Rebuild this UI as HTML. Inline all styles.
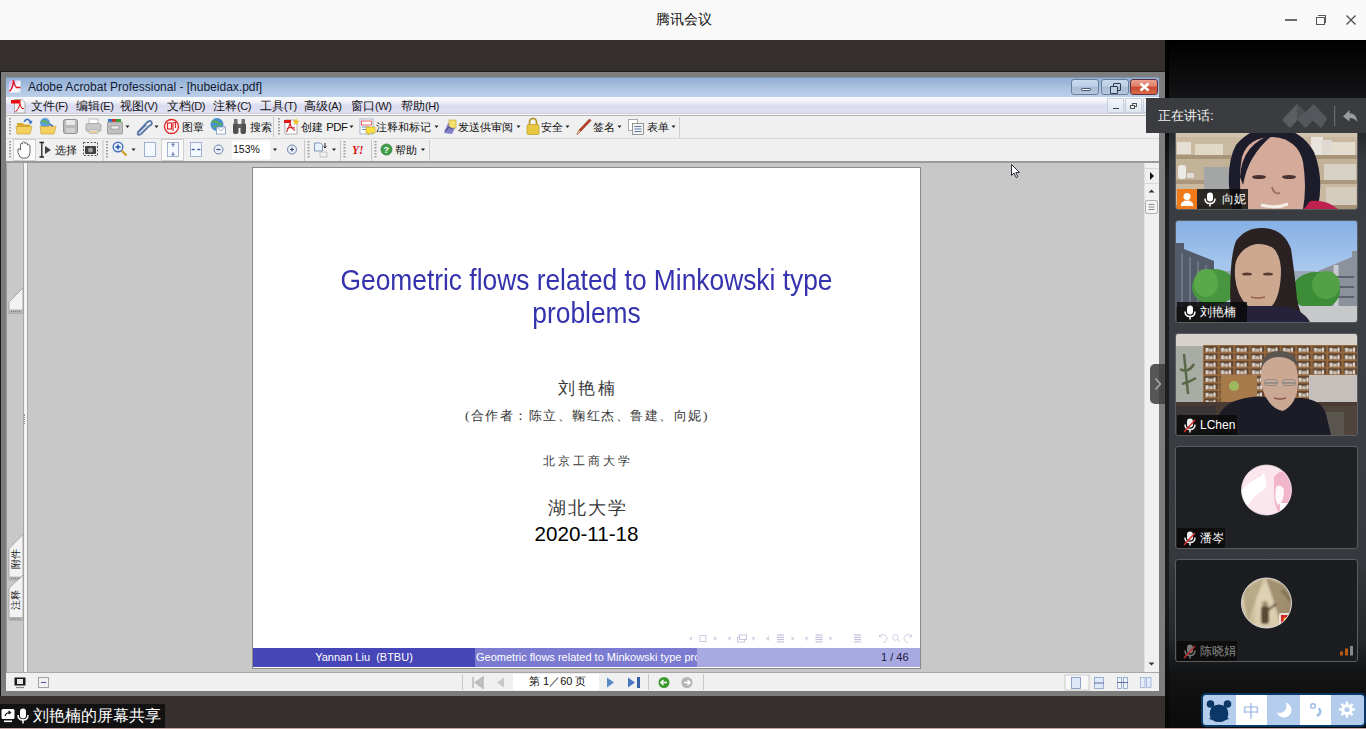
<!DOCTYPE html>
<html><head><meta charset="utf-8">
<style>
*{box-sizing:border-box;margin:0;padding:0}
html,body{width:1366px;height:729px;overflow:hidden;background:#35302d;font-family:"Liberation Sans",sans-serif;position:relative}
.a{position:absolute}
#tt{left:0;top:0;width:1366px;height:40px;background:#f9f9f9}
#tt .t{left:0;width:1366px;top:12px;text-align:center;font-size:13.6px;line-height:15px;color:#111;padding-left:1px}
#rp{left:1165px;top:40px;width:201px;height:689px;background:linear-gradient(#000 0px,#131416 58px,#36393d 120px,#3b3e42 200px,#393c40 400px,#35383c 520px,#25272a 600px,#131415 630px,#0a0a0b 689px)}
#win{left:1px;top:71px;width:1164px;height:625px;background:#7d7d7d}
#ttl{left:6px;top:77px;width:1153px;height:20px;background:linear-gradient(#6a7a90 0,#94b0d4 1px,#98b4d8 20%,#aec4e2 60%,#bccfea 100%)}
#menu{left:6px;top:97px;width:1153px;height:17px;background:linear-gradient(#fbfcfe 0,#f2f3fa 25%,#dcdcf0 50%,#e0e0f4 90%,#cacad4 100%)}
#tb{left:6px;top:114px;width:1153px;height:49px;background:#f0f0f0;border-top:1px solid #fafafa}
#doc{left:6px;top:163px;width:1153px;height:510px;background:#c8c8c8}
#stat{left:6px;top:672px;width:1153px;height:19px;background:#f0f0f0;border-top:1px solid #a8a8a8}
#page{left:252px;top:167px;width:669px;height:502px;background:#fff;border:1px solid #8a8a8a}

.wb{border:1px solid #6a7c98;border-radius:3px;background:linear-gradient(#c9d9ec 0,#bcd0e8 45%,#a8bcd4 50%,#b4c8e0 100%)}
.mn{font-size:11.5px;color:#151515;white-space:nowrap;line-height:14px;top:99px!important}
.mb{width:17px;height:15px;border:1px solid #c8d0dc;background:linear-gradient(#f4f7fb,#dde5f0)}
.tl{font-size:11.3px;color:#111;white-space:nowrap;line-height:14px}
.pt{text-align:center;font-size:28px;transform:scale(0.941,1.035);color:#3532ae;line-height:30px;white-space:nowrap}
.cj{text-align:center;color:#383838;font-family:"Liberation Serif",serif;white-space:nowrap;line-height:20px}
.tile{border:1px solid #5a5d62;border-radius:3px;overflow:hidden}
.nm{height:20px;background:rgba(10,10,10,.82);font-size:12px;color:#fff;line-height:14px;white-space:nowrap}
</style></head><body>
<div id="tt" class="a"><div class="a t">腾讯会议</div></div>
<div id="rp" class="a"></div>
<div id="win" class="a"></div>
<div class="a" style="left:0;top:71px;width:1px;height:625px;background:#151515"></div><div class="a" style="left:1px;top:71px;width:1164px;height:1px;background:#1e1e1e"></div>
<div id="ttl" class="a"></div>
<div id="menu" class="a"></div>
<div id="tb" class="a"></div><div class="a" style="left:6px;top:115px;width:1153px;height:1px;background:#b4b4b4"></div>
<div id="doc" class="a"></div>
<div id="stat" class="a"></div>
<div id="page" class="a"></div>

<!-- tencent title controls -->
<div class="a" style="left:1285px;top:19px;width:12px;height:2px;background:#6a6a6e"></div>
<div class="a" style="left:1316px;top:17px;width:9px;height:8px;border:1.5px solid #58585c"></div>
<div class="a" style="left:1318px;top:15px;width:8px;height:8px;border-top:1.5px solid #58585c;border-right:1.5px solid #58585c"></div>
<svg class="a" style="left:1345px;top:14px" width="12" height="12"><path d="M1.5 1.5L10.5 10.5M10.5 1.5L1.5 10.5" stroke="#505054" stroke-width="1.4"/></svg>
<!-- acrobat title -->
<svg class="a" style="left:8px;top:79px" width="15" height="15"><defs><linearGradient id="ig" x1="0" y1="0" x2="1" y2="1"><stop offset="0" stop-color="#c8b0e8"/><stop offset=".6" stop-color="#fff"/><stop offset="1" stop-color="#e8e8e8"/></linearGradient></defs><rect x="1" y="1.5" width="11.5" height="12" fill="url(#ig)"/><path d="M5.5 1Q5.5 8 1.5 12.5M5.5 1Q6.5 7 8.5 8.5H12.5" stroke="#e01020" stroke-width="1.4" fill="none"/></svg>
<div class="a" style="left:28px;top:80px;font-size:12px;color:#0f1a33;white-space:nowrap">Adobe Acrobat Professional - [hubeidax.pdf]</div>
<div class="a wb" style="left:1071px;top:79px;width:28px;height:16px"><div class="a" style="left:9px;top:8px;width:10px;height:3px;background:#fff;border:1px solid #4a5a78;border-radius:1px"></div></div>
<div class="a wb" style="left:1101px;top:79px;width:28px;height:16px"><div class="a" style="left:11px;top:3px;width:8px;height:8px;border:1.5px solid #2e3a50;border-radius:1px"></div><div class="a" style="left:8px;top:6px;width:8px;height:8px;border:1.5px solid #2e3a50;background:#c0cfe2;border-radius:1px"></div></div>
<div class="a" style="left:1130px;top:79px;width:28px;height:16px;border:1px solid #5a3040;border-radius:3px;background:linear-gradient(#eea090 0,#e08068 45%,#c84a2e 50%,#d86a48 100%)"><svg class="a" style="left:8px;top:2px" width="11" height="10"><path d="M1.5 1.5L9.5 8.5M9.5 1.5L1.5 8.5" stroke="#fff" stroke-width="2.6"/></svg></div>
<!-- menu -->
<svg class="a" style="left:11px;top:98px" width="15" height="16"><path d="M3.5 1.5H11L14 4.5V15H3.5Z" fill="#f6f6f6" stroke="#9a9a9a" stroke-width="0.8"/><rect x="0" y="2" width="9.5" height="3.5" fill="#e80c10"/><path d="M9 5.5Q8 11 4.5 14M9 5.5Q10 10 11 10.5H13" stroke="#e01020" stroke-width="1" fill="none"/></svg>
<div class="a mn" style="left:31px;top:98px">文件<span style="letter-spacing:-0.4px;font-size:11px">(F)</span></div>
<div class="a mn" style="left:76px;top:98px">编辑<span style="letter-spacing:-0.4px;font-size:11px">(E)</span></div>
<div class="a mn" style="left:120px;top:98px">视图<span style="letter-spacing:-0.4px;font-size:11px">(V)</span></div>
<div class="a mn" style="left:167px;top:98px">文档<span style="letter-spacing:-0.4px;font-size:11px">(D)</span></div>
<div class="a mn" style="left:213px;top:98px">注释<span style="letter-spacing:-0.4px;font-size:11px">(C)</span></div>
<div class="a mn" style="left:260px;top:98px">工具<span style="letter-spacing:-0.4px;font-size:11px">(T)</span></div>
<div class="a mn" style="left:304px;top:98px">高级<span style="letter-spacing:-0.4px;font-size:11px">(A)</span></div>
<div class="a mn" style="left:351px;top:98px">窗口<span style="letter-spacing:-0.4px;font-size:11px">(W)</span></div>
<div class="a mn" style="left:401px;top:98px">帮助<span style="letter-spacing:-0.4px;font-size:11px">(H)</span></div>
<div class="a mb" style="left:1107px;top:98px"><div class="a" style="left:5px;top:9px;width:6px;height:1px;background:#444"></div></div>
<div class="a mb" style="left:1125px;top:98px"><div class="a" style="left:6px;top:4px;width:5px;height:4px;border:1px solid #555"></div><div class="a" style="left:4px;top:6px;width:5px;height:4px;border:1px solid #555;background:#e4eaf4"></div></div>
<div class="a mb" style="left:1143px;top:98px"></div>
<svg class="a" style="left:0;top:114px" width="1160" height="50"><rect x="6" y="24" width="1153" height="1" fill="#d8d8d8"/><rect x="679" y="3" width="1" height="21" fill="#cfcfcf"/><rect x="429" y="26" width="1" height="21" fill="#cfcfcf"/><rect x="6" y="47" width="1153" height="2" fill="#9a9a9a"/><rect x="9" y="4" width="2" height="1.5" fill="#a0a0a0"/><rect x="9" y="7" width="2" height="1.5" fill="#a0a0a0"/><rect x="9" y="10" width="2" height="1.5" fill="#a0a0a0"/><rect x="9" y="13" width="2" height="1.5" fill="#a0a0a0"/><rect x="9" y="16" width="2" height="1.5" fill="#a0a0a0"/><rect x="9" y="19" width="2" height="1.5" fill="#a0a0a0"/><path d="M17 9H23L24 10.5H30V20H17Z" fill="#d8a830"/><path d="M16 12.5H32L30 20H17Z" fill="#f4d060" stroke="#c89a28" stroke-width="0.6"/><path d="M24 8C26 4 30 5 30.5 8.5" stroke="#3a70c0" stroke-width="1.6" fill="none"/><path d="M28.5 8L31 10.5L32.5 6.5Z" fill="#3a70c0"/><circle cx="45" cy="9" r="5" fill="#5aa0d8"/><path d="M41.5 7.5Q44 6 46 8T49 9" stroke="#6ab04a" stroke-width="1.6" fill="none"/><path d="M40 12.5H56L54 20H41Z" fill="#f4d060" stroke="#c89a28" stroke-width="0.6"/><path d="M49 10L53 12" stroke="#3a70c0" stroke-width="1.4"/><rect x="63.5" y="5.5" width="14" height="14" rx="2" fill="#b8b8b8" stroke="#909090"/><rect x="66" y="6" width="9" height="5" fill="#e8e8e8"/><rect x="66" y="14" width="9" height="5" fill="#d0d0d0"/><rect x="89" y="5" width="9" height="5" fill="#fff" stroke="#a0a0a0" stroke-width="0.7"/><rect x="86" y="9.5" width="15" height="8" rx="2" fill="#c8c8c8" stroke="#989898" stroke-width="0.7"/><rect x="89" y="16" width="9" height="3.5" fill="#f0f0f0" stroke="#a0a0a0" stroke-width="0.6"/><rect x="90" y="17.5" width="7" height="1" fill="#e0b040"/><rect x="108" y="5" width="4" height="3" fill="#3070d0"/><rect x="112" y="5" width="4" height="3" fill="#d03030"/><rect x="116" y="5" width="5" height="3" fill="#30a030"/><rect x="107.5" y="8" width="15" height="12" rx="1" fill="#c0c0c0" stroke="#8a8a8a" stroke-width="0.7"/><rect x="111" y="12" width="8" height="3" fill="#f0f0f0" stroke="#777" stroke-width="0.5"/><path d="M125.5 11.5H129.5L127.5 14.0Z" fill="#202020"/><path d="M137.5 18.5L147 8.5Q150 5.5 151.5 8T149 12L141 20Q139 21.5 138 20.5T139 17.5L146 10.5" stroke="#5878a8" stroke-width="1.8" fill="none"/><path d="M154.5 11.5H158.5L156.5 14.0Z" fill="#202020"/><circle cx="171.5" cy="12.5" r="7" fill="#fff" stroke="#e02828" stroke-width="1.4"/><rect x="167.5" y="9" width="4" height="6" fill="none" stroke="#e02828" stroke-width="1.2"/><path d="M173 8.5H175.5V14M173 8.5V17" stroke="#e02828" stroke-width="1.2" fill="none"/><circle cx="217" cy="10.5" r="6.5" fill="#4a90d0"/><path d="M212 8Q215 6 218 9T222 10M213 13Q216 12 219 14" stroke="#5ab04a" stroke-width="1.8" fill="none"/><rect x="216.5" y="13" width="9" height="7" fill="#fff" stroke="#7090b8" stroke-width="0.7"/><path d="M216.5 13L221 17L225.5 13" stroke="#7090b8" stroke-width="0.7" fill="none"/><rect x="233" y="9" width="5.5" height="11" rx="2" fill="#505050"/><rect x="240.5" y="9" width="5.5" height="11" rx="2" fill="#505050"/><rect x="234" y="5" width="3.5" height="5" fill="#707070"/><rect x="241.5" y="5" width="3.5" height="5" fill="#707070"/><rect x="237.5" y="10" width="4" height="4" fill="#606060"/><rect x="273" y="3" width="1" height="20" fill="#c8c8c8"/><rect x="278" y="4" width="2" height="1.5" fill="#a0a0a0"/><rect x="278" y="7" width="2" height="1.5" fill="#a0a0a0"/><rect x="278" y="10" width="2" height="1.5" fill="#a0a0a0"/><rect x="278" y="13" width="2" height="1.5" fill="#a0a0a0"/><rect x="278" y="16" width="2" height="1.5" fill="#a0a0a0"/><rect x="278" y="19" width="2" height="1.5" fill="#a0a0a0"/><path d="M285 6H294L297 9V20H285Z" fill="#fff" stroke="#909090" stroke-width="0.7"/><rect x="284" y="6" width="7" height="3" fill="#e01818"/><path d="M290 9C289.5 12 288 15 286.5 18M290 9C290.5 12 292 15 295 16.5M287 14.5C289 13.5 292 13.3 295 14" stroke="#d01818" stroke-width="1.1" fill="none"/><path d="M296 4L297 6.5L299.5 7L297.5 8.5L298 11L296 9.5L294 11L294.5 8.5L292.5 7L295 6.5Z" fill="#f0c020"/><path d="M349.5 11.5H353.5L351.5 14.0Z" fill="#202020"/><rect x="360" y="5" width="13" height="15" fill="#fff" stroke="#8898b8" stroke-width="0.7"/><rect x="361.5" y="7" width="10" height="4" fill="#fff" stroke="#e04040" stroke-width="0.8"/><path d="M362 13H370M362 15.5H368" stroke="#6080c0" stroke-width="0.9"/><path d="M366 13H375V19H370L368 21V19H366Z" fill="#f8e040" stroke="#c0a020" stroke-width="0.6"/><path d="M434.5 11.5H438.5L436.5 14.0Z" fill="#202020"/><path d="M444 19L448 9L456 12L452 20Z" fill="#8080c8"/><rect x="449" y="6" width="7" height="8" fill="#f4e070" stroke="#b09020" stroke-width="0.5"/><path d="M445 17L449 13L452 15" stroke="#5050a0" stroke-width="1.2" fill="none"/><path d="M516.5 11.5H520.5L518.5 14.0Z" fill="#202020"/><path d="M529.5 11V8.5Q529.5 4.5 533 4.5T536.5 8.5V11" stroke="#b09020" stroke-width="1.6" fill="none"/><rect x="527" y="10.5" width="12" height="10" rx="1.5" fill="#e8c840" stroke="#b89a20" stroke-width="0.7"/><path d="M565.5 11.5H569.5L567.5 14.0Z" fill="#202020"/><path d="M577 20.5L579 16L589.5 5L591 6.5L580.5 17.5Z" fill="#c04020" stroke="#802010" stroke-width="0.6"/><path d="M577 20.5L579 16L580.5 17.5Z" fill="#e0c090"/><path d="M617.5 11.5H621.5L619.5 14.0Z" fill="#202020"/><rect x="628.5" y="5.5" width="9" height="11" fill="#fff" stroke="#8a8a8a" stroke-width="0.7"/><rect x="632.5" y="9.5" width="11" height="11" fill="#f4f4f4" stroke="#707070" stroke-width="0.7"/><path d="M634.5 12.5H641.5M634.5 15H641.5M634.5 17.5H641.5" stroke="#4a6aa0" stroke-width="0.9"/><path d="M671.5 11.5H675.5L673.5 14.0Z" fill="#202020"/><rect x="9" y="27" width="2" height="1.5" fill="#a0a0a0"/><rect x="9" y="30" width="2" height="1.5" fill="#a0a0a0"/><rect x="9" y="33" width="2" height="1.5" fill="#a0a0a0"/><rect x="9" y="36" width="2" height="1.5" fill="#a0a0a0"/><rect x="9" y="39" width="2" height="1.5" fill="#a0a0a0"/><rect x="9" y="42" width="2" height="1.5" fill="#a0a0a0"/><rect x="13.5" y="25.5" width="22" height="21" fill="#fafafa" stroke="#c8c8c8" stroke-width="0.8"/><path d="M20 43Q17 38 18 35Q19 34 20.5 36V30Q21 28.5 22.5 30V28.5Q23.5 27 25 28.5V29.5Q26 28 27.5 29.5V31Q28.5 30 30 31.5V39Q29.5 43 27 44H22Z" fill="#fff" stroke="#555" stroke-width="0.9"/><path d="M39.5 28.5H44M39.5 43H44M41.8 28.5V43" stroke="#222" stroke-width="1.3"/><path d="M45 32L51 36L45 40Z" fill="#404040"/><rect x="83.5" y="28.5" width="14" height="13" fill="none" stroke="#444" stroke-width="0.9" stroke-dasharray="2 1.5"/><rect x="85" y="32" width="11" height="8" rx="1" fill="#404040"/><circle cx="90.5" cy="36" r="2.5" fill="#a0a0a0"/><rect x="102.5" y="26" width="1" height="21" fill="#c8c8c8"/><rect x="106" y="27" width="2" height="1.5" fill="#a0a0a0"/><rect x="106" y="30" width="2" height="1.5" fill="#a0a0a0"/><rect x="106" y="33" width="2" height="1.5" fill="#a0a0a0"/><rect x="106" y="36" width="2" height="1.5" fill="#a0a0a0"/><rect x="106" y="39" width="2" height="1.5" fill="#a0a0a0"/><rect x="106" y="42" width="2" height="1.5" fill="#a0a0a0"/><circle cx="118" cy="33" r="4.8" fill="#e8f0fc" stroke="#4a72c0" stroke-width="1.4"/><path d="M115.5 33H120.5M118 30.5V35.5" stroke="#2050b0" stroke-width="1.4"/><path d="M121.5 36.5L126.5 41.5" stroke="#d0a030" stroke-width="2.4"/><path d="M131.5 34.5H135.5L133.5 37.0Z" fill="#202020"/><rect x="144.5" y="28.5" width="11" height="14" fill="#f4f8ff" stroke="#8aa0c8" stroke-width="0.8"/><rect x="161.5" y="25.5" width="22" height="21" fill="#fafafa" stroke="#c8c8c8" stroke-width="0.8"/><rect x="167.5" y="28.5" width="11" height="14" fill="#f4f8ff" stroke="#8aa0c8" stroke-width="0.8"/><path d="M173 29.5V33M171.5 31L173 29.5L174.5 31M173 41.5V38M171.5 40L173 41.5L174.5 40" stroke="#2a4a8a" stroke-width="0.8" fill="none"/><rect x="190.5" y="28.5" width="11" height="14" fill="#f4f8ff" stroke="#8aa0c8" stroke-width="0.8"/><path d="M192 35.5H195M193 34.5L192 35.5L193 36.5M200 35.5H197M199 34.5L200 35.5L199 36.5" stroke="#2a4a8a" stroke-width="0.8" fill="none"/><circle cx="218.5" cy="35.5" r="4.5" fill="#e8eef8" stroke="#6a7fa8" stroke-width="1"/><path d="M216.5 35.5H220.5" stroke="#3a4a78" stroke-width="1.2"/><rect x="231" y="26" width="40" height="20" rx="2" fill="#fff" stroke="#e4e4e4" stroke-width="0.8"/><path d="M273 34.5H277L275 37.0Z" fill="#202020"/><circle cx="292" cy="35.5" r="4.5" fill="#e8eef8" stroke="#6a7fa8" stroke-width="1"/><path d="M290 35.5H294M292 33.5V37.5" stroke="#3a4a78" stroke-width="1.2"/><rect x="304" y="26" width="1" height="21" fill="#c8c8c8"/><rect x="307.5" y="27" width="2" height="1.5" fill="#a0a0a0"/><rect x="307.5" y="30" width="2" height="1.5" fill="#a0a0a0"/><rect x="307.5" y="33" width="2" height="1.5" fill="#a0a0a0"/><rect x="307.5" y="36" width="2" height="1.5" fill="#a0a0a0"/><rect x="307.5" y="39" width="2" height="1.5" fill="#a0a0a0"/><rect x="307.5" y="42" width="2" height="1.5" fill="#a0a0a0"/><path d="M314.5 29H320.5L322.5 31V37H314.5Z" fill="#e8f0fc" stroke="#6a80b0" stroke-width="0.8"/><path d="M320 38H327V43H320Z" fill="#f0f0f0" stroke="#b0b0b0" stroke-width="0.7"/><path d="M325 29V34M323.5 32.5L325 34L326.5 32.5" stroke="#202020" stroke-width="1" fill="none"/><path d="M332 34.5H336L334 37.0Z" fill="#202020"/><rect x="340" y="26" width="1" height="21" fill="#c8c8c8"/><rect x="343.5" y="27" width="2" height="1.5" fill="#a0a0a0"/><rect x="343.5" y="30" width="2" height="1.5" fill="#a0a0a0"/><rect x="343.5" y="33" width="2" height="1.5" fill="#a0a0a0"/><rect x="343.5" y="36" width="2" height="1.5" fill="#a0a0a0"/><rect x="343.5" y="39" width="2" height="1.5" fill="#a0a0a0"/><rect x="343.5" y="42" width="2" height="1.5" fill="#a0a0a0"/><text x="352" y="40" font-family="Liberation Serif" font-weight="bold" font-style="italic" font-size="11.5" fill="#d8101c">Y!</text><rect x="371" y="26" width="1" height="21" fill="#c8c8c8"/><rect x="374.5" y="27" width="2" height="1.5" fill="#a0a0a0"/><rect x="374.5" y="30" width="2" height="1.5" fill="#a0a0a0"/><rect x="374.5" y="33" width="2" height="1.5" fill="#a0a0a0"/><rect x="374.5" y="36" width="2" height="1.5" fill="#a0a0a0"/><rect x="374.5" y="39" width="2" height="1.5" fill="#a0a0a0"/><rect x="374.5" y="42" width="2" height="1.5" fill="#a0a0a0"/><circle cx="386.5" cy="35.5" r="5.5" fill="#40a048" stroke="#287030" stroke-width="0.7"/><text x="383.5" y="39" font-family="Liberation Sans" font-weight="bold" font-size="9" fill="#fff">?</text><path d="M421 34.5H425L423 37.0Z" fill="#202020"/></svg>
<div class="a tl" style="left:182px;top:120px">图章</div>
<div class="a tl" style="left:250px;top:120px">搜索</div>
<div class="a tl" style="left:301px;top:120px">创建 <span style="letter-spacing:-0.4px">PDF</span></div>
<div class="a tl" style="left:376px;top:120px">注释和标记</div>
<div class="a tl" style="left:458px;top:120px">发送供审阅</div>
<div class="a tl" style="left:541px;top:120px">安全</div>
<div class="a tl" style="left:593px;top:120px">签名</div>
<div class="a tl" style="left:647px;top:120px">表单</div>
<div class="a tl" style="left:55px;top:143px">选择</div>
<div class="a tl" style="left:233px;top:142px;font-size:10.5px">153%</div>
<div class="a tl" style="left:395px;top:143px">帮助</div>

<!-- left nav -->
<div class="a" style="left:6px;top:163px;width:17px;height:509px;background:#c8c8c8;border-left:1px solid #9a9a9a"></div>
<div class="a" style="left:23px;top:163px;width:5px;height:509px;background:#f4f4f4;border-left:1px solid #a8a8a8;border-right:1px solid #a8a8a8"></div>
<div class="a" style="left:24px;top:414px;width:3px;height:10px;border-left:1px dotted #909090"></div>
<svg class="a" style="left:7px;top:286px" width="17" height="30"><path d="M2 16L16 2V27.5H2Z" fill="#f2f2f2" stroke="#9a9a9a" stroke-width="0.8"/><rect x="2" y="23.5" width="14" height="4" fill="#b4b4b4"/><path d="M4 25.5H14" stroke="#777" stroke-width="1" stroke-dasharray="1 1"/></svg>
<svg class="a" style="left:7px;top:532px" width="17" height="92"><path d="M2 16.5L16 2.5V48H2Z" fill="#f2f2f2" stroke="#9a9a9a" stroke-width="0.8"/><rect x="2" y="44.5" width="14" height="3.5" fill="#b4b4b4"/><path d="M2 56L16 43V88H2Z" fill="#f2f2f2" stroke="#9a9a9a" stroke-width="0.8"/><rect x="2" y="85" width="14" height="3.5" fill="#b4b4b4"/><path d="M4 46.5H14M4 87H14" stroke="#777" stroke-width="1" stroke-dasharray="1 1"/></svg>
<div class="a" style="left:6px;top:553px;width:20px;height:12px;font-size:10px;line-height:12px;color:#111;transform:rotate(-90deg);text-align:center">附件</div>
<div class="a" style="left:6px;top:594px;width:20px;height:12px;font-size:10px;line-height:12px;color:#111;transform:rotate(-90deg);text-align:center">注释</div>
<!-- scrollbar -->
<div class="a" style="left:1144px;top:163px;width:15px;height:509px;background:#f0f0f0;border-left:1px solid #e0e0e0"></div>
<div class="a" style="left:1144px;top:168px;width:15px;height:1px;background:#d8d8d8"></div>
<div class="a" style="left:1144px;top:183px;width:15px;height:1px;background:#d8d8d8"></div>
<svg class="a" style="left:1144px;top:163px" width="15" height="510"><path d="M6 9V17L10 13Z" fill="#111"/><path d="M4.5 29.5H10.5L7.5 26.5Z" fill="#333"/><rect x="1.5" y="37.5" width="12" height="13" rx="1.5" fill="#f4f4f4" stroke="#a0a0a0" stroke-width="0.8"/><path d="M4.5 41.5H10.5M4.5 44H10.5M4.5 46.5H10.5" stroke="#707070" stroke-width="0.8"/><path d="M4.5 499.5H10.5L7.5 502.5Z" fill="#333"/></svg>
<svg class="a" style="left:1010px;top:163px" width="12" height="16"><path d="M1.5 1.5V12.5L4 10L6.2 14.5L7.8 13.8L5.8 9.5H9.5Z" fill="#fff" stroke="#1a1a2a" stroke-width="0.9" stroke-linejoin="miter"/></svg>
<!-- page content -->
<div class="a pt" style="left:253px;top:266px;width:667px">Geometric flows related to Minkowski type</div>
<div class="a pt" style="left:253px;top:299px;width:667px">problems</div>
<div class="a cj" style="left:253px;top:379px;width:667px;font-size:17px;letter-spacing:3.2px;text-indent:3px">刘艳楠</div>
<div class="a cj" style="left:253px;top:406px;width:667px;font-size:13.4px;letter-spacing:1.5px;text-indent:1px">(合作者：陈立、鞠红杰、鲁建、向妮)</div>
<div class="a cj" style="left:253px;top:451px;width:667px;font-size:12px;letter-spacing:3px;text-indent:3px">北京工商大学</div>
<div class="a cj" style="left:253px;top:498px;width:667px;font-size:18px;letter-spacing:2px;text-indent:2px">湖北大学</div>
<div class="a" style="left:253px;top:522px;width:667px;text-align:center;font-size:20.6px;color:#000;line-height:23px">2020-11-18</div>
<svg class="a" style="left:680px;top:630px" width="240" height="16"><path d="M12.0 6L9.0 8.5L12.0 11Z" fill="#d4d4e6"/><rect x="20" y="5.5" width="6" height="6" fill="none" stroke="#c4c4e0" stroke-width="0.9"/><path d="M34.0 6L37.0 8.5L34.0 11Z" fill="#d4d4e6"/><path d="M50.5 6L47.5 8.5L50.5 11Z" fill="#d4d4e6"/><rect x="57.5" y="7.5" width="7" height="4.5" fill="none" stroke="#c0c0e0" stroke-width="0.9"/><rect x="59.5" y="5" width="7" height="4.5" fill="#fff" stroke="#c0c0e0" stroke-width="0.9"/><path d="M72.5 6L75.5 8.5L72.5 11Z" fill="#d4d4e6"/><path d="M89.0 6L86.0 8.5L89.0 11Z" fill="#d4d4e6"/><path d="M97.0 5H104.0M97.0 7.3H104.0M97.0 9.6H104.0M97.0 11.9H104.0" stroke="#b8b8dc" stroke-width="1"/><path d="M111.5 6L114.5 8.5L111.5 11Z" fill="#d4d4e6"/><path d="M127.5 6L124.5 8.5L127.5 11Z" fill="#d4d4e6"/><path d="M135.5 5H142.5M135.5 7.3H142.5M135.5 9.6H142.5M135.5 11.9H142.5" stroke="#b8b8dc" stroke-width="1"/><path d="M149.5 6L152.5 8.5L149.5 11Z" fill="#d4d4e6"/><path d="M174.0 5H181.0M174.0 7.3H181.0M174.0 9.6H181.0M174.0 11.9H181.0" stroke="#b8b8dc" stroke-width="1"/><g fill="none" stroke="#c8c8e2" stroke-width="0.9"><path d="M203 12.5A4 4 0 1 0 199.5 6.5M199.5 4.5V7H202"/><circle cx="215.5" cy="7.5" r="2.8"/><path d="M217.5 9.5L220 12"/><path d="M228 12.5A4 4 0 1 1 231.5 6.5M231.5 4.5V7H229"/></g></svg>
<div class="a" style="left:253px;top:648px;width:222px;height:19px;background:#4646b8"></div>
<div class="a" style="left:475px;top:648px;width:222px;height:19px;background:#7b7bd2;overflow:hidden"><div class="a" style="left:1px;top:2px;font-size:11px;color:#fff;white-space:nowrap;line-height:14px">Geometric flows related to Minkowski type problems</div></div>
<div class="a" style="left:697px;top:648px;width:223px;height:19px;background:#a9a9e2"></div>
<div class="a" style="left:253px;top:650px;width:222px;text-align:center;font-size:11px;color:#fff;white-space:pre;line-height:14px">Yannan Liu  (BTBU)</div>
<div class="a" style="left:881px;top:650px;font-size:11px;color:#1a1a40;white-space:pre;line-height:14px">1 / 46</div>
<!-- status bar -->
<svg class="a" style="left:6px;top:672px" width="1153" height="19"><rect x="8.5" y="5.5" width="11" height="8" fill="#1a1a1a"/><rect x="11" y="7" width="6" height="5" fill="#e8e8e8"/><path d="M10 15.5H18" stroke="#888" stroke-width="1.2"/><rect x="32.5" y="5.5" width="10" height="10" fill="#f0f0f0" stroke="#909090" stroke-width="0.8"/><path d="M35 10.5H40" stroke="#5050a0" stroke-width="1"/>
<rect x="456" y="2" width="1" height="16" fill="#c8c8c8"/>
<path d="M467 5V16M477 5L469.5 10.5L477 16Z" stroke="#b8b8b8" stroke-width="1.5" fill="#c0c0c0"/>
<path d="M498 5.5L491 10.5L498 15.5Z" fill="#c8c8c8"/>
<rect x="507" y="2" width="86" height="16" fill="#fff"/>
<path d="M601 5.5L608 10.5L601 15.5Z" fill="#5a88c8"/>
<path d="M622 5.5L629 10.5L622 15.5Z" fill="#4a78c0"/><rect x="631" y="5" width="3" height="11" fill="#3a60a8"/>
<rect x="642" y="2" width="1" height="16" fill="#c8c8c8"/>
<circle cx="658" cy="10.5" r="5.5" fill="#3e9a30"/><path d="M661 10.5H655.5M657.5 8L655 10.5L657.5 13" stroke="#fff" stroke-width="1.6" fill="none"/>
<circle cx="681" cy="10.5" r="5.5" fill="#b4b4b4"/><path d="M678 10.5H683.5M681.5 8L684 10.5L681.5 13" stroke="#fff" stroke-width="1.6" fill="none"/>
<rect x="697" y="2" width="1" height="16" fill="#c8c8c8"/>
<rect x="1059" y="3" width="24" height="15" fill="#f8f8f8" stroke="#c0c0c0" stroke-width="0.8"/><rect x="1065.5" y="5.5" width="9" height="11" fill="#dfe8f6" stroke="#7a90b8" stroke-width="0.8"/>
<rect x="1088.5" y="5.5" width="9" height="11" fill="#dfe8f6" stroke="#8aa0c8" stroke-width="0.8"/><path d="M1088 11H1098" stroke="#5a70a0" stroke-width="1"/>
<rect x="1111.5" y="5.5" width="4" height="11" fill="#eef2fa" stroke="#8aa0c8" stroke-width="0.8"/><rect x="1117.5" y="5.5" width="4" height="11" fill="#eef2fa" stroke="#8aa0c8" stroke-width="0.8"/><path d="M1111 10.5H1122" stroke="#5a70a0" stroke-width="1"/>
<rect x="1134.5" y="5.5" width="4.5" height="10" fill="#e4eaf8" stroke="#9ab0d8" stroke-width="0.8"/><rect x="1140.5" y="5.5" width="4.5" height="10" fill="#e4eaf8" stroke="#9ab0d8" stroke-width="0.8"/>
</svg>
<div class="a" style="left:529px;top:674px;font-size:11px;color:#111;white-space:pre;line-height:14px">第 1／60 页</div>

<!-- bottom line + share label -->
<div class="a" style="left:0;top:728px;width:1366px;height:1px;background:#c4a4a4"></div>
<div class="a" style="left:0;top:704px;width:165px;height:24px;background:#121212"></div>
<svg class="a" style="left:1px;top:707px" width="30" height="18"><rect x="0.5" y="2" width="13" height="10" rx="1.5" fill="#fff"/><path d="M4 9Q5 5.5 9 5.5M7.5 4L9.5 5.5L7.5 7" stroke="#121212" stroke-width="1.2" fill="none"/><rect x="3" y="13.5" width="8" height="1.6" fill="#fff"/><rect x="19" y="1.5" width="6" height="10" rx="3" fill="#fff"/><path d="M17 8Q17 13 22 13T27 8M22 13V16.5" stroke="#fff" stroke-width="1.5" fill="none"/></svg>
<div class="a" style="left:33px;top:706px;font-size:16px;color:#fff;line-height:20px;white-space:nowrap">刘艳楠的屏幕共享</div>
<!-- right panel -->
<div class="a" style="left:1165px;top:40px;width:4px;height:688px;background:linear-gradient(#000 0,#000 60px,#1d1e21 140px,#1a1b1d 560px,#050505 688px)"></div>
<!-- tile 1 -->
<div class="a tile" style="left:1175px;top:106px;width:183px;height:104px">
<svg width="181" height="102" style="display:block">
<defs><filter id="b1" x="-5%" y="-5%" width="110%" height="110%"><feGaussianBlur stdDeviation="0.7"/></filter></defs>
<g filter="url(#b1)">
<rect width="181" height="102" fill="#c8b9a0"/>
<rect y="0" width="181" height="30" fill="#d0c4ae"/>
<rect y="48" width="181" height="4" fill="#a89478"/><rect y="73" width="181" height="4" fill="#ab977b"/><rect y="98" width="181" height="4" fill="#a89478"/>
<rect y="52" width="181" height="21" fill="#c2b298"/>
<rect x="1" y="35" width="14" height="12" fill="#e6e0d4"/><rect x="19" y="37" width="28" height="11" fill="#e2d8c6"/>
<rect x="2" y="58" width="8" height="14" rx="3" fill="#eceae4"/><rect x="11" y="66" width="7" height="5" fill="#e0dcd4"/>
<rect x="28" y="60" width="26" height="25" fill="#a4a6a6"/>
<rect x="135" y="30" width="12" height="18" fill="#e8e4dc"/><rect x="155" y="35" width="24" height="13" fill="#e4dccc"/><rect x="146" y="33" width="10" height="15" fill="#dedad2"/>
<rect x="148" y="57" width="32" height="16" fill="#d8d2c6"/><rect x="130" y="59" width="12" height="14" fill="#e2dcd0"/>
<rect x="150" y="80" width="30" height="18" fill="#d4ccbc"/>
<path d="M56 102Q48 60 60 38Q75 20 98 20Q125 22 138 45Q148 70 142 100L130 102Z" fill="#1e1c2c"/>
<path d="M66 102Q62 70 66 50Q72 30 97 30Q122 32 127 55Q131 80 127 102Z" fill="#d4aa9a"/>
<path d="M64 70Q66 36 98 27Q84 38 76 52Q70 62 67 78Z" fill="#1e1c2c"/>
<ellipse cx="83" cy="70" rx="7" ry="2" fill="#4a3030"/><ellipse cx="113" cy="70" rx="7" ry="2" fill="#4a3030"/>
<path d="M96 80Q98 88 104 86" stroke="#a07060" stroke-width="2" fill="none"/>
<path d="M85 98Q100 102 112 97" stroke="#f4ece6" stroke-width="3" fill="none"/>
<path d="M128 102L134 94Q150 92 162 102Z" fill="#c02050"/>
</g></svg></div>
<!-- tile 2 -->
<div class="a tile" style="left:1175px;top:220px;width:183px;height:103px">
<svg width="181" height="101" style="display:block">
<defs><linearGradient id="sky" x1="0" y1="0" x2="0" y2="1"><stop offset="0" stop-color="#86b0e4"/><stop offset="0.6" stop-color="#b2cef0"/></linearGradient><filter id="b2" x="-5%" y="-5%" width="110%" height="110%"><feGaussianBlur stdDeviation="0.5"/></filter></defs>
<g filter="url(#b2)">
<rect width="181" height="101" fill="url(#sky)"/>
<path d="M0 22H8V28L38 40V88H0Z" fill="#525a6a"/>
<path d="M6 32V86M14 36V86M22 40V86M30 44V86" stroke="#6e7686" stroke-width="2"/>
<path d="M142 50L176 36V30H181V88H142Z" fill="#8c929c"/><path d="M160 44V88" stroke="#c8ccd2" stroke-width="5"/>
<path d="M146 56H178M146 66H178M146 76H178" stroke="#5c6270" stroke-width="2"/>
<rect x="40" y="50" width="100" height="20" fill="#9aa8b8"/>
<ellipse cx="38" cy="66" rx="22" ry="18" fill="#4a9640"/><ellipse cx="30" cy="62" rx="12" ry="14" fill="#5aa84a"/>
<ellipse cx="140" cy="70" rx="24" ry="19" fill="#3e8c38"/><ellipse cx="150" cy="64" rx="14" ry="14" fill="#52a046"/>
<rect x="120" y="85" width="61" height="16" fill="#c6c8ca"/>
<rect x="0" y="86" width="60" height="15" fill="#3c3e3c"/>
<path d="M55 101Q52 40 60 20Q70 6 88 7Q108 8 115 28Q119 55 121 78Q124 94 130 101Z" fill="#2a2220"/>
<path d="M59 56Q57 24 80 20Q103 21 105 48Q105 74 96 85Q84 91 72 85Q61 76 59 56Z" fill="#cda890"/>
<path d="M58 45Q60 16 82 14Q104 15 108 36Q96 22 80 23Q64 26 58 45Z" fill="#2a2220"/>
<ellipse cx="71" cy="53" rx="5" ry="1.6" fill="#5a3a30"/><ellipse cx="92" cy="53" rx="5" ry="1.6" fill="#5a3a30"/>
<path d="M75 76Q82 78 89 76" stroke="#9a6050" stroke-width="1.6" fill="none"/>
<path d="M42 101Q46 88 68 85H104Q126 87 134 101Z" fill="#28223a"/>
</g></svg></div>
<!-- tile 3 -->
<div class="a tile" style="left:1175px;top:333px;width:183px;height:103px">
<svg width="181" height="101" style="display:block">
<defs><filter id="b3" x="-5%" y="-5%" width="110%" height="110%"><feGaussianBlur stdDeviation="0.6"/></filter><pattern id="bk" x="27" y="11" width="15.5" height="7.5" patternUnits="userSpaceOnUse"><rect width="15.5" height="7.5" fill="#9a6a3e"/><rect x="1.2" y="1" width="13.5" height="5.8" fill="#5e4430"/><rect x="2.5" y="2.8" width="3" height="4" fill="#ddd6ce"/><rect x="6" y="3.5" width="4" height="3.3" fill="#c8beb2"/><rect x="10.5" y="2.5" width="2" height="4.3" fill="#e8e2da"/></pattern></defs>
<g filter="url(#b3)">
<rect width="181" height="101" fill="#b8b0a8"/>
<rect width="181" height="12" fill="#d8d2cc"/>
<rect x="0" y="12" width="27" height="56" fill="#a8aca4"/>
<path d="M8 20L12 60M4 35Q12 40 18 30M6 50Q14 48 20 44" stroke="#5a6a48" stroke-width="2.5" fill="none"/>
<rect x="27" y="11" width="154" height="30" fill="url(#bk)"/>
<rect x="27" y="41" width="18" height="30" fill="url(#bk)"/>
<rect x="45" y="41" width="36" height="28" fill="#a87a4c"/>
<rect x="81" y="41" width="52" height="28" fill="url(#bk)"/>
<rect x="133" y="41" width="48" height="28" fill="#c4bfba"/>
<circle cx="58" cy="52" r="5" fill="#a0b860"/>
<rect x="0" y="68" width="181" height="33" fill="#4a3a32"/>
<rect x="0" y="72" width="40" height="29" fill="#3a3636"/><rect x="140" y="72" width="41" height="29" fill="#50443e"/>
<rect x="148" y="78" width="20" height="23" fill="#5a5450"/>
<path d="M38 101Q40 72 62 66Q80 60 96 64H126Q146 66 150 80L155 101Z" fill="#1a1c28"/>
<path d="M85 50Q83 21 103 19Q123 21 122 50Q121 70 107 77Q91 74 85 50Z" fill="#caa894"/>
<path d="M85 34Q87 17 103 17Q120 17 122 32Q114 23 103 23Q91 23 85 34Z" fill="#5a5450"/>
<path d="M88 49H102M106 49H120" stroke="#888" stroke-width="1.4"/>
<rect x="89" y="45.5" width="12" height="6" rx="2" fill="none" stroke="#8a8a8a" stroke-width="0.9"/><rect x="107" y="45.5" width="12" height="6" rx="2" fill="none" stroke="#8a8a8a" stroke-width="0.9"/>
<path d="M98 64Q104 66 110 64" stroke="#8a5a50" stroke-width="1.5" fill="none"/>
</g></svg></div>
<!-- tile 4 -->
<div class="a tile" style="left:1175px;top:446px;width:183px;height:103px;background:#1f2023">
<svg width="181" height="101" style="display:block">
<defs><clipPath id="c4"><circle cx="90.5" cy="43" r="25"/></clipPath><filter id="b4"><feGaussianBlur stdDeviation="0.5"/></filter></defs>
<g clip-path="url(#c4)"><rect width="181" height="101" fill="#fce6ee"/><g filter="url(#b4)"><path d="M60 50Q70 36 84 30L88 26L90 34Q92 40 86 44Q76 50 70 62L60 70Z" fill="#fff"/><path d="M98 30Q106 20 118 26Q124 36 118 48L116 70L104 70Q98 58 98 46Z" fill="#f2b6cc"/><path d="M100 40Q104 36 108 42Q108 56 102 58Q98 52 100 40Z" fill="#fff8fa"/><rect x="104" y="56" width="14" height="20" fill="#fff"/></g></g>
<circle cx="90.5" cy="43" r="25" fill="none" stroke="#f0e0e6" stroke-width="0.8"/>
</svg></div>
<!-- tile 5 -->
<div class="a tile" style="left:1175px;top:559px;width:183px;height:103px;background:#1c1d20">
<svg width="181" height="101" style="display:block">
<defs><clipPath id="c5"><circle cx="90.5" cy="43" r="25"/></clipPath><radialGradient id="g5" cx="0.45" cy="0.35" r="0.7"><stop offset="0" stop-color="#e2d6b8"/><stop offset="0.5" stop-color="#c2b28c"/><stop offset="1" stop-color="#8c7a58"/></radialGradient><filter id="b5"><feGaussianBlur stdDeviation="0.8"/></filter></defs>
<g clip-path="url(#c5)"><rect width="181" height="101" fill="url(#g5)"/><g filter="url(#b5)"><path d="M66 30L88 18L72 62Z" fill="#a89a78" opacity=".7"/><path d="M90 18L112 26L120 52L104 60Z" fill="#8a7658" opacity=".7"/><path d="M88 18L76 70H106Z" fill="#ddd2b4" opacity=".8"/><path d="M106 30L118 44" stroke="#6a5a40" stroke-width="3" opacity=".6"/><circle cx="89" cy="44" r="3" fill="#a09070"/><rect x="85" y="46" width="8" height="18" rx="3" fill="#5a4a34"/><path d="M92 50L100 44" stroke="#4a3a28" stroke-width="2"/></g><rect x="103" y="53" width="16" height="14" rx="2" fill="#e8e0d8"/><rect x="105" y="55" width="14" height="14" fill="#d02828"/><circle cx="109" cy="59" r="1.5" fill="#f0d020"/></g>
<circle cx="90.5" cy="43" r="25" fill="none" stroke="#d8d8d8" stroke-width="1"/>
<rect x="164" y="91.5" width="3" height="4" fill="#b85a10"/><rect x="169" y="88.5" width="3" height="7" fill="#b85a10"/><rect x="174" y="86" width="3" height="9.5" fill="#888"/>
</svg></div>
<!-- name overlays -->
<div class="a" style="left:1177px;top:189px;width:20px;height:20px;background:#f07a1a"></div>
<svg class="a" style="left:1177px;top:189px" width="20" height="20"><circle cx="10" cy="7.5" r="3.5" fill="#fff"/><path d="M3.5 17Q4 11.5 10 11.5T16.5 17Z" fill="#fff"/></svg>
<div class="a nm" style="left:1197px;top:189px;width:51px"><svg class="a" style="left:6px;top:3px" width="14" height="15"><rect x="4" y="0.5" width="6" height="9" rx="3" fill="#fff"/><path d="M2 6.5Q2 11.5 7 11.5T12 6.5M7 11.5V14.5" stroke="#fff" stroke-width="1.5" fill="none"/></svg><span class="a" style="left:25px;top:3px">向妮</span></div>
<div class="a nm" style="left:1177px;top:302px;width:70px"><svg class="a" style="left:6px;top:3px" width="14" height="15"><rect x="4" y="0.5" width="6" height="9" rx="3" fill="#fff"/><path d="M2 6.5Q2 11.5 7 11.5T12 6.5M7 11.5V14.5" stroke="#fff" stroke-width="1.5" fill="none"/></svg><span class="a" style="left:23px;top:3px">刘艳楠</span></div>
<div class="a nm" style="left:1177px;top:415px;width:60px"><svg class="a" style="left:5px;top:3px" width="15" height="15"><rect x="5" y="0.5" width="6" height="9" rx="3" fill="#eee"/><path d="M3 6.5Q3 11.5 8 11.5T13 6.5M8 11.5V14.5" stroke="#eee" stroke-width="1.5" fill="none"/><path d="M2 14L13 2" stroke="#e03030" stroke-width="1.4"/></svg><span class="a" style="left:23px;top:3px">LChen</span></div>
<div class="a nm" style="left:1177px;top:528px;width:48px"><svg class="a" style="left:5px;top:3px" width="15" height="15"><rect x="5" y="0.5" width="6" height="9" rx="3" fill="#eee"/><path d="M3 6.5Q3 11.5 8 11.5T13 6.5M8 11.5V14.5" stroke="#eee" stroke-width="1.5" fill="none"/><path d="M2 14L13 2" stroke="#e03030" stroke-width="1.4"/></svg><span class="a" style="left:23px;top:3px">潘岑</span></div>
<div class="a nm" style="left:1177px;top:641px;width:60px"><svg class="a" style="left:5px;top:3px" width="15" height="15"><rect x="5" y="0.5" width="6" height="9" rx="3" fill="#777"/><path d="M3 6.5Q3 11.5 8 11.5T13 6.5M8 11.5V14.5" stroke="#777" stroke-width="1.5" fill="none"/><path d="M2 14L13 2" stroke="#c03030" stroke-width="1.4"/></svg><span class="a" style="left:23px;top:3px;color:#888">陈晓娟</span></div>
<!-- speaking overlay -->
<div class="a" style="left:1146px;top:98px;width:220px;height:35px;background:#3a3c40"></div>
<div class="a" style="left:1158px;top:108px;font-size:13px;color:#f0f0f0;line-height:16px;white-space:nowrap">正在讲话:</div>
<svg class="a" style="left:1280px;top:100px" width="86" height="32"><path d="M3.5 19Q2.5 20 3.5 21L10 27.5L24.5 12L17 4.5Z" fill="#5b5e61" stroke="#5b5e61" stroke-width="1" stroke-linejoin="round"/><path d="M17 4.5L24.5 12L17 20Z" fill="#4c4f53"/><path d="M18 20L33.5 4.5L46 17.5Q47 19 46 20L41 27.5L33 20L25.5 27.5Z" fill="#54575b" stroke="#54575b" stroke-width="1" stroke-linejoin="round"/><rect x="54" y="6" width="1.2" height="20" fill="#6a6c70"/><path d="M63 16.5L69.5 10V13.3Q76.5 13.5 77.5 22Q74.5 18 69.5 18V21.5Z" fill="#9a9ca0"/></svg>
<!-- collapse tab -->
<div class="a" style="left:1150px;top:364px;width:15px;height:40px;border-radius:5px 0 0 5px;background:rgba(60,60,60,.85)"></div>
<svg class="a" style="left:1153px;top:376px" width="10" height="16"><path d="M2.5 2.5L7.5 8L2.5 13.5" stroke="#b8b8b8" stroke-width="1.2" fill="none"/></svg>
<!-- IME bar -->
<div class="a" style="left:1201px;top:693px;width:165px;height:34px;border:2px solid #083868;border-radius:5px;background:#b4cdec;overflow:hidden">
  <div class="a" style="left:33px;top:0;width:31px;height:30px;background:#fff"></div>
  <div class="a" style="left:97px;top:0;width:31px;height:30px;background:#fff"></div>
</div>
<svg class="a" style="left:1201px;top:693px" width="165" height="34"><circle cx="9.5" cy="11" r="3.8" fill="#0a3766"/><circle cx="26.5" cy="11" r="3.8" fill="#0a3766"/><path d="M11 14Q8 18 9 23Q10.5 29 18 29Q25.5 29 27 23Q28 18 25 14Q22 11.5 18 11.5Q14 11.5 11 14Z" fill="#0a3766"/><path d="M8 26L10 24L12 27Z M28 26L26 24L24 27Z" fill="#0a3766"/>
<text x="42" y="24" font-size="17" fill="#9ebce4" font-family="Liberation Sans">中</text>
<circle cx="83" cy="17" r="7.5" fill="#fff"/><circle cx="78.5" cy="13" r="7" fill="#b4cdec"/>
<circle cx="112" cy="13" r="2.3" fill="none" stroke="#9ebce4" stroke-width="1.5"/><path d="M117.5 15.5Q120.5 17 118.5 21L116 23" stroke="#9ebce4" stroke-width="2.4" fill="none"/>
<path d="M146 8.5V24.5M138 16.5H154M140.3 10.8L151.7 22.2M151.7 10.8L140.3 22.2" stroke="#fff" stroke-width="2.4"/><circle cx="146" cy="16.5" r="5.5" fill="#fff"/><circle cx="146" cy="16.5" r="2.6" fill="#b4cdec"/>
</svg>
</body></html>
